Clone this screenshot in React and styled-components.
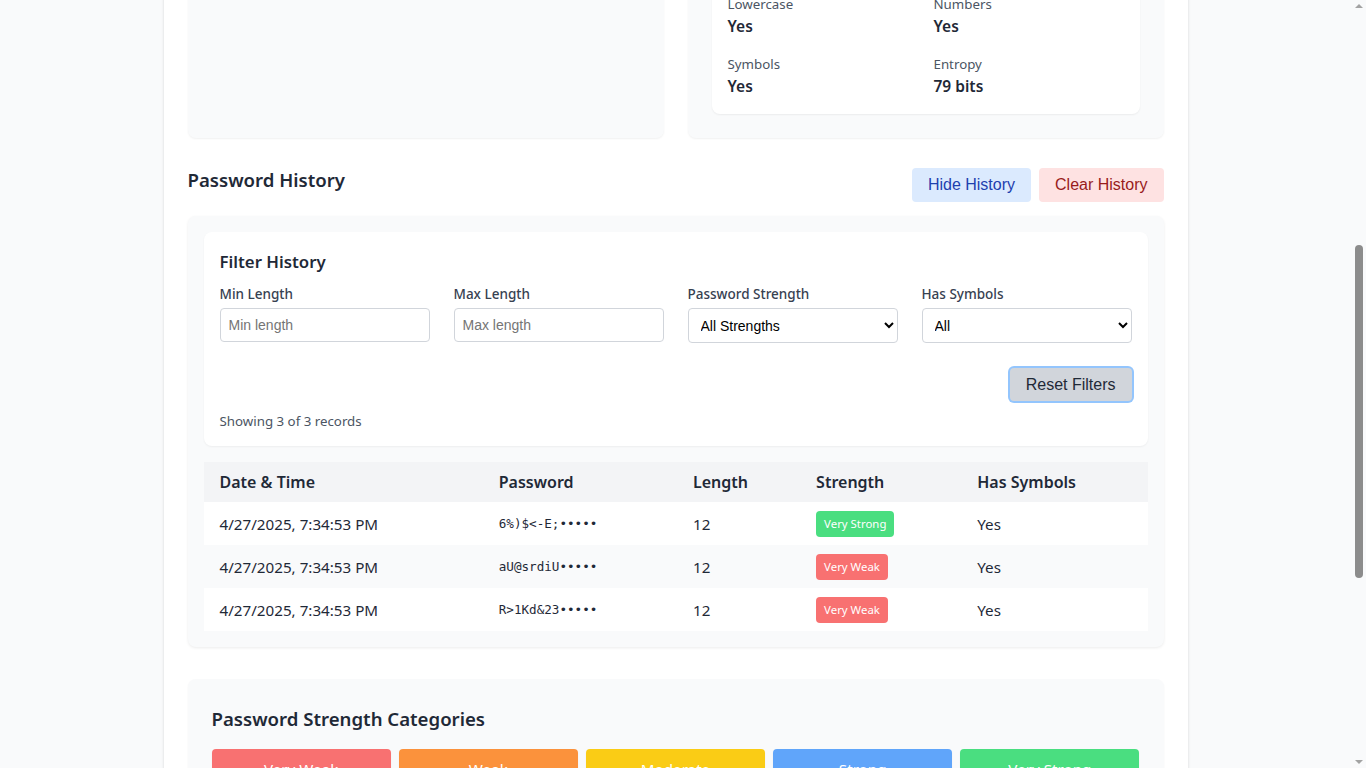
import React, { useLayoutEffect, useRef } from 'react';
import styled, { createGlobalStyle } from 'styled-components';

const GlobalStyle = createGlobalStyle`
  html, body {
    margin: 0;
    padding: 0;
  }
  body {
    background: #f9fafb;
    font-family: "Noto Sans", "Open Sans", sans-serif;
    color: #1f2937;
    padding-right: 15px;
  }
  * {
    box-sizing: border-box;
  }
`;

const history = [
  { date: '4/27/2025, 7:34:53 PM', password: '6%)$<-E;•••••', length: 12, strength: 'Very Strong', symbols: 'Yes' },
  { date: '4/27/2025, 7:34:53 PM', password: 'aU@srdiU•••••', length: 12, strength: 'Very Weak', symbols: 'Yes' },
  { date: '4/27/2025, 7:34:53 PM', password: 'R>1Kd&23•••••', length: 12, strength: 'Very Weak', symbols: 'Yes' },
];

const strengthColors = {
  'Very Weak': '#f87171',
  Weak: '#fb923c',
  Moderate: '#facc15',
  Strong: '#60a5fa',
  'Very Strong': '#4ade80',
};

const categories = [
  { name: 'Very Weak', bits: '0 - 27 bits', text: 'Can be cracked almost instantly.' },
  { name: 'Weak', bits: '28 - 35 bits', text: 'Cracked within minutes to hours.' },
  { name: 'Moderate', bits: '36 - 59 bits', text: 'Resists casual attacks for a while.' },
  { name: 'Strong', bits: '60 - 127 bits', text: 'Takes years to crack by brute force.' },
  { name: 'Very Strong', bits: '128+ bits', text: 'Practically impossible to crack.' },
];

const stats = [
  ['Length', '12 characters'],
  ['Uppercase', 'Yes'],
  ['Lowercase', 'Yes'],
  ['Numbers', 'Yes'],
  ['Symbols', 'Yes'],
  ['Entropy', '79 bits'],
];

const columns = [
  ['Date & Time', 279],
  ['Password', 194],
  ['Length', 123],
  ['Strength', 161],
  ['Has Symbols', 186],
];

const App = () => {
  const historyRef = useRef(null);

  useLayoutEffect(() => {
    const el = historyRef.current;
    if (!el) return;
    const top = el.getBoundingClientRect().top + window.scrollY;
    window.scrollTo(0, top - 162);
  }, []);

  return (
    <>
      <GlobalStyle />
      <Page>
        <Title>Password Generator</Title>

        <Output>
          <OutputText>6%)$&lt;-E;k9Qz</OutputText>
          <SoftButton tone="blue">Copy</SoftButton>
        </Output>

        <CardRow>
          <Card>
            <CardTitle>Settings</CardTitle>
            <SettingLabel>Password Length: 12</SettingLabel>
            <Range type="range" min="4" max="64" defaultValue="12" />
            <CheckList>
              <Check><input type="checkbox" defaultChecked /> Include Uppercase</Check>
              <Check><input type="checkbox" defaultChecked /> Include Lowercase</Check>
              <Check><input type="checkbox" defaultChecked /> Include Numbers</Check>
              <Check><input type="checkbox" defaultChecked /> Include Symbols</Check>
            </CheckList>
            <GenerateButton>Generate Password</GenerateButton>
          </Card>

          <Card>
            <CardTitle>Password Analysis</CardTitle>
            <StatsBox>
              <StrengthLine>
                Strength: <strong>Very Strong</strong>
              </StrengthLine>
              <Meter>
                <MeterFill style={{ width: '100%' }} />
              </Meter>
              <CrackTime>Estimated crack time: centuries</CrackTime>
              <StatsGrid>
                {stats.map(([label, value]) => (
                  <div key={label}>
                    <StatLabel>{label}</StatLabel>
                    <StatValue>{value}</StatValue>
                  </div>
                ))}
              </StatsGrid>
            </StatsBox>
          </Card>
        </CardRow>

        <Section ref={historyRef}>
          <SectionHead>
            <SectionTitle>Password History</SectionTitle>
            <ButtonRow>
              <SoftButton tone="blue">Hide History</SoftButton>
              <SoftButton tone="red">Clear History</SoftButton>
            </ButtonRow>
          </SectionHead>

          <HistoryCard>
            <FilterBox>
              <FilterTitle>Filter History</FilterTitle>
              <FilterGrid>
                <Field>
                  <FieldLabel>Min Length</FieldLabel>
                  <TextInput type="number" placeholder="Min length" />
                </Field>
                <Field>
                  <FieldLabel>Max Length</FieldLabel>
                  <TextInput type="number" placeholder="Max length" />
                </Field>
                <Field>
                  <FieldLabel>Password Strength</FieldLabel>
                  <Select defaultValue="all">
                    <option value="all">All Strengths</option>
                    <option>Very Weak</option>
                    <option>Weak</option>
                    <option>Moderate</option>
                    <option>Strong</option>
                    <option>Very Strong</option>
                  </Select>
                </Field>
                <Field>
                  <FieldLabel>Has Symbols</FieldLabel>
                  <Select defaultValue="all">
                    <option value="all">All</option>
                    <option>Yes</option>
                    <option>No</option>
                  </Select>
                </Field>
              </FilterGrid>
              <Actions>
                <ResetButton>Reset Filters</ResetButton>
              </Actions>
              <Showing>Showing 3 of 3 records</Showing>
            </FilterBox>

            <Table>
              <thead>
                <tr>
                  {columns.map(([name, w]) => (
                    <Th key={name} w={w}>{name}</Th>
                  ))}
                </tr>
              </thead>
              <tbody>
                {history.map((row, i) => (
                  <Tr key={i} striped={i % 2 === 1}>
                    <Td>{row.date}</Td>
                    <Td mono>{row.password}</Td>
                    <Td>{row.length}</Td>
                    <Td>
                      <Badge color={strengthColors[row.strength]}>{row.strength}</Badge>
                    </Td>
                    <Td>{row.symbols}</Td>
                  </Tr>
                ))}
              </tbody>
            </Table>
          </HistoryCard>
        </Section>

        <CategoriesCard>
          <SectionTitle as="h3" spaced>Password Strength Categories</SectionTitle>
          <TileGrid>
            {categories.map((c) => (
              <Tile key={c.name}>
                <TileHead color={strengthColors[c.name]}>{c.name}</TileHead>
                <TileBody>
                  <TileBits>{c.bits}</TileBits>
                  <TileText>{c.text}</TileText>
                </TileBody>
              </Tile>
            ))}
          </TileGrid>
        </CategoriesCard>

        <TipsCard>
          <SectionTitle as="h3" spaced>Password Security Tips</SectionTitle>
          <Tips>
            <li>Use at least 12 characters with a mix of letters, numbers and symbols.</li>
            <li>Never reuse the same password across different accounts.</li>
            <li>Store your passwords in a trusted password manager.</li>
            <li>Turn on two-factor authentication wherever it is available.</li>
          </Tips>
        </TipsCard>
      </Page>

      <ScrollRail aria-hidden="true">
        <ArrowUp />
        <Thumb />
        <ArrowDown />
      </ScrollRail>
    </>
  );
};

const Page = styled.div`
  max-width: 1024px;
  margin: 0 auto;
  padding: 24px;
  background: #ffffff;
  box-shadow: 0 1px 3px rgba(0, 0, 0, 0.1), 0 1px 2px rgba(0, 0, 0, 0.06);
  min-height: 100vh;
`;

const Title = styled.h1`
  margin: 0 0 24px;
  font-size: 28px;
  line-height: 36px;
  font-weight: 700;
  text-align: center;
  color: #1f2937;
`;

const Output = styled.div`
  display: flex;
  align-items: center;
  justify-content: space-between;
  gap: 16px;
  padding: 24px;
  margin-bottom: 24px;
  background: #f9fafb;
  border-radius: 8px;
  box-shadow: 0 1px 2px rgba(0, 0, 0, 0.06);
`;

const OutputText = styled.div`
  font-family: "DejaVu Sans Mono", monospace;
  font-size: 22px;
  line-height: 32px;
`;

const CardRow = styled.div`
  display: grid;
  grid-template-columns: 1fr 1fr;
  gap: 24px;
`;

const Card = styled.div`
  background: #f9fafb;
  border-radius: 8px;
  padding: 24px;
  box-shadow: 0 1px 2px rgba(0, 0, 0, 0.06);
`;

const CardTitle = styled.h2`
  margin: 0 0 16px;
  font-size: 18.6px;
  line-height: 28px;
  font-weight: 600;
`;

const SettingLabel = styled.div`
  font-size: 13.3px;
  line-height: 20px;
  font-weight: 500;
  color: #374151;
`;

const Range = styled.input`
  width: 100%;
  margin: 8px 0 8px;
`;

const CheckList = styled.div`
  display: grid;
  grid-template-columns: 1fr 1fr;
  gap: 8px;
  margin-bottom: 16px;
`;

const Check = styled.label`
  display: flex;
  align-items: center;
  gap: 8px;
  font-size: 13.3px;
  line-height: 20px;
`;

const GenerateButton = styled.button`
  width: 100%;
  padding: 10px 16px;
  border: none;
  border-radius: 4px;
  background: #3b82f6;
  color: #ffffff;
  font-family: "Liberation Sans", Arial, sans-serif;
  font-size: 16px;
`;

const StatsBox = styled.div`
  background: #ffffff;
  border-radius: 8px;
  padding: 16px;
  box-shadow: 0 1px 2px rgba(0, 0, 0, 0.06);
`;

const StrengthLine = styled.div`
  font-size: 15.2px;
  line-height: 24px;
  margin-bottom: 8px;
`;

const Meter = styled.div`
  height: 10px;
  border-radius: 5px;
  background: #e5e7eb;
  overflow: hidden;
  margin-bottom: 8px;
`;

const MeterFill = styled.div`
  height: 100%;
  background: #4ade80;
`;

const CrackTime = styled.div`
  font-size: 13.3px;
  line-height: 20px;
  color: #4b5563;
  margin-bottom: 16px;
`;

const StatsGrid = styled.div`
  display: grid;
  grid-template-columns: 1fr 1fr;
  gap: 16px;
`;

const StatLabel = styled.div`
  font-size: 13.3px;
  line-height: 20px;
  color: #4b5563;
`;

const StatValue = styled.div`
  font-size: 15.5px;
  line-height: 24px;
  font-weight: 600;
  color: #1f2937;
`;

const Section = styled.section`
  margin-top: 24px;
`;

const SectionHead = styled.div`
  display: flex;
  justify-content: space-between;
  align-items: flex-start;
  margin-bottom: 14px;
`;

const SectionTitle = styled.h2`
  margin: ${(p) => (p.spaced ? '0 0 16px' : '4px 0 0')};
  font-size: 18.6px;
  line-height: 28px;
  font-weight: 600;
  color: #1f2937;
`;

const ButtonRow = styled.div`
  display: flex;
  gap: 8px;
  margin-top: 6px;
`;

const SoftButton = styled.button`
  padding: 8px 16px;
  border: none;
  border-radius: 4px;
  font-family: "Liberation Sans", Arial, sans-serif;
  font-size: 16px;
  line-height: 18px;
  background: ${(p) => (p.tone === 'red' ? '#fee2e2' : '#dbeafe')};
  color: ${(p) => (p.tone === 'red' ? '#991b1b' : '#1e40af')};
  cursor: pointer;
`;

const HistoryCard = styled.div`
  background: #f9fafb;
  border-radius: 8px;
  padding: 16px;
  box-shadow: 0 1px 3px rgba(0, 0, 0, 0.08);
`;

const FilterBox = styled.div`
  background: #ffffff;
  border-radius: 8px;
  padding: 16px 16px 15px;
  margin-bottom: 16px;
  box-shadow: 0 1px 2px rgba(0, 0, 0, 0.05);
`;

const FilterTitle = styled.h3`
  margin: 0 0 8px;
  font-size: 16.8px;
  line-height: 28px;
  font-weight: 600;
`;

const FilterGrid = styled.div`
  display: grid;
  grid-template-columns: repeat(4, 1fr);
  gap: 24px;
`;

const Field = styled.div`
  display: flex;
  flex-direction: column;
`;

const FieldLabel = styled.label`
  font-size: 13.5px;
  line-height: 20px;
  font-weight: 500;
  color: #374151;
  margin-bottom: 4px;
`;

const TextInput = styled.input`
  height: 34px;
  padding: 0 8px;
  border: 1px solid #d1d5db;
  border-radius: 4px;
  font-family: "Liberation Sans", Arial, sans-serif;
  font-size: 14px;
  color: #111827;
  background: #ffffff;
  -moz-appearance: textfield;
  &::-webkit-outer-spin-button,
  &::-webkit-inner-spin-button {
    -webkit-appearance: none;
    margin: 0;
  }
  &::placeholder {
    color: #757575;
  }
`;

const Select = styled.select`
  height: 35px;
  padding: 0 8px;
  border: 1px solid #d1d5db;
  border-radius: 4px;
  font-family: "Liberation Sans", Arial, sans-serif;
  font-size: 14px;
  color: #000000;
  background: #ffffff;
`;

const Actions = styled.div`
  display: flex;
  justify-content: flex-end;
  margin-top: 25px;
`;

const ResetButton = styled.button`
  padding: 8px 16px;
  border: none;
  border-radius: 4px;
  background: #d1d5db;
  color: #1f2937;
  font-family: "Liberation Sans", Arial, sans-serif;
  font-size: 16px;
  line-height: 17px;
  box-shadow: 0 0 0 2px #93c5fd;
`;

const Showing = styled.div`
  margin-top: 10px;
  font-size: 13.3px;
  line-height: 20px;
  color: #4b5563;
`;

const Table = styled.table`
  width: 100%;
  border-collapse: collapse;
  table-layout: fixed;
`;

const Th = styled.th`
  width: ${(p) => p.w}px;
  padding: 8px 16px;
  text-align: left;
  background: #f3f4f6;
  font-size: 16px;
  line-height: 24px;
  font-weight: 600;
  color: #1f2937;
`;

const Tr = styled.tr`
  height: 43px;
  background: ${(p) => (p.striped ? '#f9fafb' : '#ffffff')};
`;

const Td = styled.td`
  padding: 0 16px;
  font-family: ${(p) => (p.mono ? '"DejaVu Sans Mono", "Liberation Mono", monospace' : 'inherit')};
  font-size: ${(p) => (p.mono ? '12.6px' : '15.2px')};
  line-height: 24px;
  color: #1f2937;
  vertical-align: middle;
`;

const Badge = styled.span`
  display: inline-block;
  padding: 4px 8px;
  border-radius: 4px;
  background: ${(p) => p.color};
  color: #ffffff;
  font-size: 11.4px;
  line-height: 18px;
`;

const CategoriesCard = styled.div`
  margin-top: 32px;
  padding: 26px 24px 24px;
  background: #f9fafb;
  border-radius: 8px;
  box-shadow: 0 1px 2px rgba(0, 0, 0, 0.05);
`;

const TileGrid = styled.div`
  display: grid;
  grid-template-columns: repeat(5, 1fr);
  gap: 8px;
`;

const Tile = styled.div`
  border-radius: 4px;
  overflow: hidden;
  background: #ffffff;
  box-shadow: 0 1px 2px rgba(0, 0, 0, 0.06);
`;

const TileHead = styled.div`
  padding: 8px;
  background: ${(p) => p.color};
  color: #ffffff;
  text-align: center;
  font-size: 15.2px;
  line-height: 24px;
`;

const TileBody = styled.div`
  padding: 12px;
  text-align: center;
`;

const TileBits = styled.div`
  font-size: 13.3px;
  line-height: 20px;
  font-weight: 600;
  margin-bottom: 4px;
`;

const TileText = styled.div`
  font-size: 12.4px;
  line-height: 18px;
  color: #4b5563;
`;

const TipsCard = styled.div`
  margin-top: 24px;
  padding: 24px;
  background: #f9fafb;
  border-radius: 8px;
  box-shadow: 0 1px 2px rgba(0, 0, 0, 0.05);
`;

const Tips = styled.ul`
  margin: 0;
  padding-left: 20px;
  font-size: 13.3px;
  line-height: 24px;
  color: #374151;
`;

/* stand-in for the browser's classic scrollbar, which the headless shot hides */
const ScrollRail = styled.div`
  position: fixed;
  top: 0;
  right: 0;
  width: 15px;
  height: 100vh;
  background: #f9fafb;
  display: flex;
  flex-direction: column;
  align-items: center;
`;

const ArrowUp = styled.div`
  margin-top: 4px;
  width: 0;
  height: 0;
  border-left: 4px solid transparent;
  border-right: 4px solid transparent;
  border-bottom: 4px solid #a3a3a3;
`;

const Thumb = styled.div`
  margin-top: 237px;
  width: 8px;
  height: 333px;
  border-radius: 4px;
  background: #8c8c8c;
`;

const ArrowDown = styled.div`
  margin-top: auto;
  margin-bottom: 4px;
  width: 0;
  height: 0;
  border-left: 4px solid transparent;
  border-right: 4px solid transparent;
  border-top: 4px solid #a3a3a3;
`;

export default App;
